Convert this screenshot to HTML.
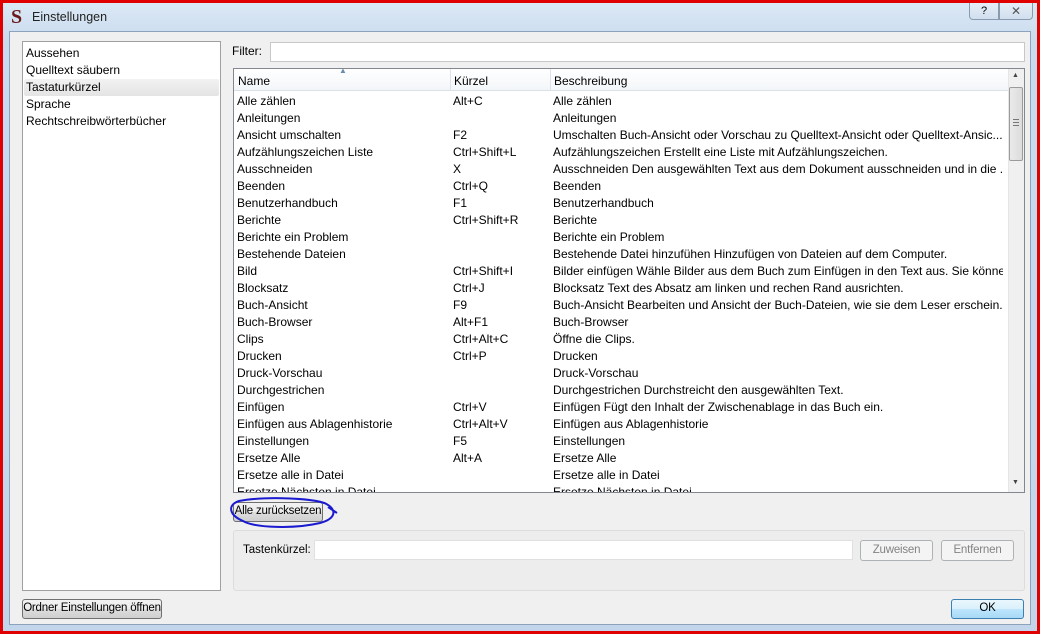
<!DOCTYPE html>
<html><head><meta charset="utf-8"><style>
*{box-sizing:border-box;margin:0;padding:0}
body{width:1040px;height:634px;overflow:hidden;background:#e00000;font-family:"Liberation Sans",sans-serif;font-size:12px;color:#000;position:relative}
.frame{position:absolute;left:3px;top:3px;width:1034px;height:628px;background:linear-gradient(#dbe8f5,#c9dbee 40px,#c3d5ea);}
.title{position:absolute;left:32px;top:10px;font-size:12.5px;color:#222}
.logo{position:absolute;left:11px;top:6px;font-family:"Liberation Serif",serif;font-weight:bold;font-size:20px;color:#6a1a1a}
.client{position:absolute;left:9px;top:31px;width:1022px;height:594px;background:#f0f0f0;border:1px solid #8da2bb}
.abs{position:absolute}
.box{position:absolute;background:#fff;border:1px solid #a0a0a0}
.btn{position:absolute;border:1px solid #707070;border-radius:3px;background:linear-gradient(#f2f2f2,#ebebeb 50%,#dddddd 51%,#cfcfcf);text-align:center;line-height:17px;white-space:nowrap;font-size:11.5px;letter-spacing:-0.2px;overflow:hidden}
.dis{border-color:#adb2b5;background:#f4f4f4;color:#838383}
.row{position:absolute;left:0;height:17px;line-height:17px;white-space:nowrap}
</style></head><body>
<div class="frame"></div>
<div class="logo">S</div>
<div class="title">Einstellungen</div>
<div class="abs" style="left:969px;top:3px;width:30px;height:17px;border:1px solid #8a9bb0;border-top:none;border-radius:0 0 0 4px;background:linear-gradient(#e6eef7,#d1dfee);text-align:center;font-size:11px;line-height:16px">?</div>
<div class="abs" style="left:999px;top:3px;width:34px;height:17px;border:1px solid #8a9bb0;border-top:none;border-radius:0 0 4px 0;background:linear-gradient(#e6eef7,#d1dfee);text-align:center;font-size:12px;line-height:16px;color:#555">✕</div>
<div class="client"></div>

<div class="box" style="left:22px;top:41px;width:199px;height:550px">
 <div class="row" style="left:3px;top:3px">Aussehen</div>
 <div class="row" style="left:3px;top:20px">Quelltext säubern</div>
 <div class="abs" style="left:1px;top:37px;width:195px;height:17px;background:linear-gradient(#f2f2f2,#e4e4e4);border-radius:2px"></div>
 <div class="row" style="left:3px;top:37px">Tastaturkürzel</div>
 <div class="row" style="left:3px;top:54px">Sprache</div>
 <div class="row" style="left:3px;top:71px">Rechtschreibwörterbücher</div>
</div>

<div class="abs" style="left:232px;top:44px">Filter:</div>
<div class="box" style="left:270px;top:42px;width:755px;height:20px;border-color:#c8c8c8"></div>

<div class="box" style="left:233px;top:68px;width:792px;height:425px;border-color:#828790;overflow:hidden">
 <div class="abs" style="left:0;top:0;width:775px;height:22px;background:linear-gradient(#fff,#f3f6f9);border-bottom:1px solid #dbe0e6"></div>
 <div class="abs" style="left:216px;top:0;width:1px;height:22px;background:#dde2e8"></div>
 <div class="abs" style="left:316px;top:0;width:1px;height:22px;background:#dde2e8"></div>
 <div class="abs" style="left:4px;top:5px">Name</div>
 <div class="abs" style="left:105px;top:-3px;font-size:8px;color:#6a8bb0">▲</div>
 <div class="abs" style="left:220px;top:5px">Kürzel</div>
 <div class="abs" style="left:320px;top:5px">Beschreibung</div>
 <div class="abs" style="left:774px;top:0;width:16px;height:423px;background:#f0f0f0;border-left:1px solid #e6e6e6"></div>
 <div class="abs" style="left:778px;top:3px;font-size:7px;color:#444">▲</div>
 <div class="abs" style="left:778px;top:410px;font-size:7px;color:#444">▼</div>
 <div class="abs" style="left:775px;top:18px;width:14px;height:74px;border:1px solid #9b9b9b;border-radius:2px;background:linear-gradient(90deg,#eaeaea,#dcdcdc)"></div>
 <div class="abs" style="left:779px;top:50px;width:6px;height:7px;border-top:1px solid #777;border-bottom:1px solid #777"></div>
 <div class="abs" style="left:779px;top:53px;width:6px;height:1px;background:#777"></div>
 <div id="rows" class="abs" style="left:0;top:24px;width:775px;height:399px;overflow:hidden"></div>
</div>

<div class="btn" style="left:233px;top:502px;width:90px;height:20px">Alle zurücksetzen</div>
<svg class="abs" style="left:225px;top:495px" width="120" height="36"><path d="M14 6 C40 1 95 3 103 10 C112 16 110 24 95 28 C70 34 30 33 18 26 C4 20 2 10 14 6 Z M103 12 L112 18" fill="none" stroke="#1a1ad0" stroke-width="2"/></svg>

<div class="abs" style="left:233px;top:530px;width:792px;height:61px;border:1px solid #dcdcdc;border-radius:3px;background:#ededed"></div>
<div class="abs" style="left:243px;top:544px;white-space:nowrap;font-size:11.5px">Tastenkürzel:</div>
<div class="box" style="left:314px;top:540px;width:539px;height:20px;border-color:#e0e0e0"></div>
<div class="btn dis" style="left:860px;top:540px;width:73px;height:21px;line-height:19px">Zuweisen</div>
<div class="btn dis" style="left:941px;top:540px;width:73px;height:21px;line-height:19px">Entfernen</div>

<div class="btn" style="left:22px;top:599px;width:140px;height:20px">Ordner Einstellungen öffnen</div>
<div class="btn" style="left:951px;top:599px;width:73px;height:20px;border-color:#3c7fb1;background:linear-gradient(#eaf6fd,#d9f0fc 50%,#bee6fd 51%,#a7d9f5)">OK</div>

<script>
var d=[["Alle zählen","Alt+C","Alle zählen"],["Anleitungen","","Anleitungen"],["Ansicht umschalten","F2","Umschalten Buch-Ansicht oder Vorschau zu Quelltext-Ansicht oder Quelltext-Ansic..."],["Aufzählungszeichen Liste","Ctrl+Shift+L","Aufzählungszeichen Erstellt eine Liste mit Aufzählungszeichen."],["Ausschneiden","X","Ausschneiden Den ausgewählten Text aus dem Dokument ausschneiden und in die ..."],["Beenden","Ctrl+Q","Beenden"],["Benutzerhandbuch","F1","Benutzerhandbuch"],["Berichte","Ctrl+Shift+R","Berichte"],["Berichte ein Problem","","Berichte ein Problem"],["Bestehende Dateien","","Bestehende Datei hinzufühen Hinzufügen von Dateien auf dem Computer."],["Bild","Ctrl+Shift+I","Bilder einfügen Wähle Bilder aus dem Buch zum Einfügen in den Text aus. Sie könne..."],["Blocksatz","Ctrl+J","Blocksatz Text des Absatz am linken und rechen Rand ausrichten."],["Buch-Ansicht","F9","Buch-Ansicht Bearbeiten und Ansicht der Buch-Dateien, wie sie dem Leser erschein..."],["Buch-Browser","Alt+F1","Buch-Browser"],["Clips","Ctrl+Alt+C","Öffne die Clips."],["Drucken","Ctrl+P","Drucken"],["Druck-Vorschau","","Druck-Vorschau"],["Durchgestrichen","","Durchgestrichen Durchstreicht den ausgewählten Text."],["Einfügen","Ctrl+V","Einfügen Fügt den Inhalt der Zwischenablage in das Buch ein."],["Einfügen aus Ablagenhistorie","Ctrl+Alt+V","Einfügen aus Ablagenhistorie"],["Einstellungen","F5","Einstellungen"],["Ersetze Alle","Alt+A","Ersetze Alle"],["Ersetze alle in Datei","","Ersetze alle in Datei"],["Ersetze Nächsten in Datei","","Ersetze Nächsten in Datei"]];
var h="";d.forEach(function(r,i){var t=i*17;h+='<div class="row" style="left:3px;top:'+t+'px">'+r[0]+'</div><div class="row" style="left:219px;top:'+t+'px">'+r[1]+'</div><div class="row" style="left:319px;top:'+t+'px;width:450px;overflow:hidden">'+r[2]+'</div>';});
document.getElementById("rows").innerHTML=h;
</script>
</body></html>
